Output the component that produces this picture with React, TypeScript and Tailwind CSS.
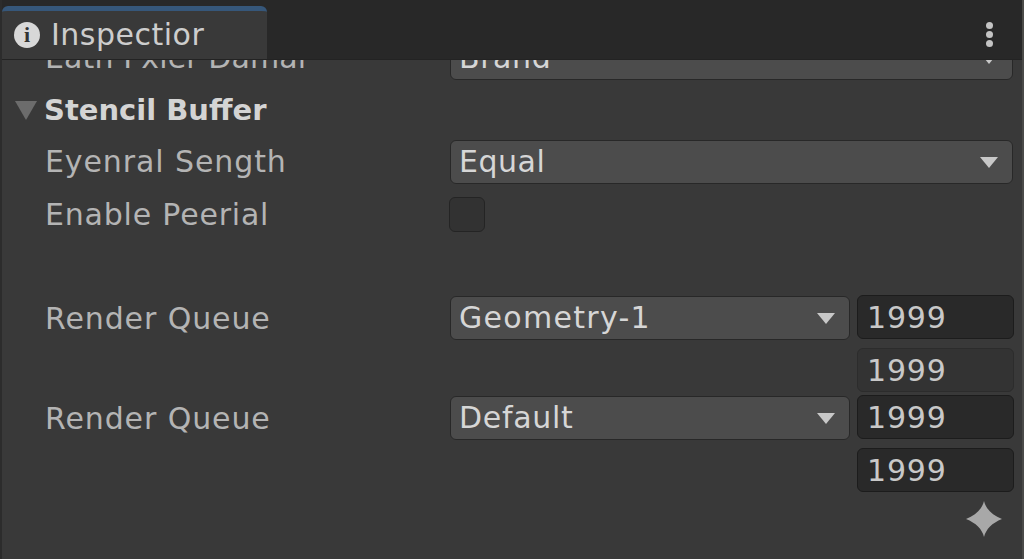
const font = { fontFamily: '"DejaVu Sans", sans-serif' };

function Caret({ className }: { className: string }) {
  return (
    <svg viewBox="0 0 18 12" preserveAspectRatio="none" className={className}>
      <path d="M0 0H18L9 12Z" fill="currentColor" />
    </svg>
  );
}

function Dropdown({ value, className }: { value: string; className: string }) {
  return (
    <div
      className={`flex h-[44px] items-center justify-between rounded-[6px] border border-[#282828] bg-[#4c4c4c] pl-[8px] pr-[14px] text-[30px] leading-none text-[#d6d6d6] ${className}`}
    >
      <span>{value}</span>
      <Caret className="h-[11px] w-[18px] text-[#c8c8c8]" />
    </div>
  );
}

function NumberField({ dark, className }: { dark?: boolean; className: string }) {
  return (
    <div
      className={`flex h-[44px] w-[157px] items-center rounded-[6px] border pl-[9px] pt-[2px] text-[30px] leading-none tracking-[0.8px] text-[#c8c8c8] ${
        dark ? "border-[#1c1c1c] bg-[#292929]" : "border-[#2c2c2c] bg-[#333333]"
      } ${className}`}
    >
      1999
    </div>
  );
}

function Label({ children, className }: { children: string; className: string }) {
  return (
    <div className={`w-[448px] shrink-0 pl-[43px] text-[30px] leading-none text-[#b4b4b4] ${className}`}>
      {children}
    </div>
  );
}

export default function App() {
  return (
    <div
      className="flex h-[559px] w-[1024px] flex-col overflow-hidden border-l-2 border-r-2 border-l-[#2c2c2c] border-r-[#4a4a48] bg-[#393939]"
      style={font}
    >
      <header className="z-10 flex h-[60px] shrink-0 items-end justify-between border-b border-[#232323] bg-[#282828]">
        <div className="flex h-[53px] w-[265px] items-center gap-[11px] rounded-t-[6px] border-t-[5px] border-[#36577a] bg-[#393939] pl-[12px]">
          <span className="flex h-[26px] w-[26px] items-center justify-center rounded-full bg-[#d8d8d8] font-['Liberation_Serif'] text-[22px] font-bold leading-none text-[#333333]">
            i
          </span>
          <span className="text-[30px] leading-none tracking-[0.5px] text-[#cdcdcd]">Inspectior</span>
        </div>
        <div className="mb-[12px] mr-[29px] flex flex-col gap-[2px]">
          <span className="h-[7px] w-[7px] rounded-full bg-[#c4c4c4]" />
          <span className="h-[7px] w-[7px] rounded-full bg-[#c4c4c4]" />
          <span className="h-[7px] w-[7px] rounded-full bg-[#c4c4c4]" />
        </div>
      </header>

      <main className="relative flex-1 overflow-hidden">
        {/* row scrolled under the header */}
        <div className="-mt-[24px] flex items-center">
          <Label className="tracking-[0.1px]">Eatn Pxier Damai</Label>
          <Dropdown value="Brand" className="w-[563px] tracking-[0.6px]" />
        </div>

        <div className="mt-[16px] flex items-center gap-[7px] pl-[13px]">
          <Caret className="h-[19px] w-[22px] text-[#6c6c6c]" />
          <span className="text-[29px] font-bold leading-none text-[#d4d4d4]">Stencil Buffer</span>
        </div>

        <div className="mt-[15px] flex items-center">
          <Label className="tracking-[0.9px]">Eyenral Sength</Label>
          <Dropdown value="Equal" className="w-[563px] tracking-[0.5px]" />
        </div>

        <div className="mt-[13px] flex items-center">
          <Label className="tracking-[0.8px]">Enable Peerial</Label>
          <div className="-ml-[1px] h-[35px] w-[36px] rounded-[6px] border border-[#242424] bg-[#323232]" />
        </div>

        <div className="mt-[64px] flex items-start">
          <Label className="mt-[8px] tracking-[0.9px]">Render Queue</Label>
          <Dropdown value="Geometry-1" className="w-[400px] tracking-[1.3px]" />
          <div className="ml-[7px] flex flex-col">
            <NumberField dark className="-mt-[1px]" />
            <NumberField className="mt-[9px]" />
          </div>
        </div>

        <div className="mt-[4px] flex items-start">
          <Label className="mt-[8px] tracking-[0.9px]">Render Queue</Label>
          <Dropdown value="Default" className="w-[400px] tracking-[0.7px]" />
          <div className="ml-[7px] flex flex-col">
            <NumberField dark className="-mt-[1px]" />
            <NumberField dark className="mt-[9px]" />
          </div>
        </div>

        <svg viewBox="0 0 36 36" className="absolute bottom-[22px] right-[20px] h-[36px] w-[36px] text-[#a8a8a8]">
          <path d="M18 0C20 8 26 14 36 18C26 22 20 28 18 36C16 28 10 22 0 18C10 14 16 8 18 0Z" fill="currentColor" />
        </svg>
      </main>
    </div>
  );
}
